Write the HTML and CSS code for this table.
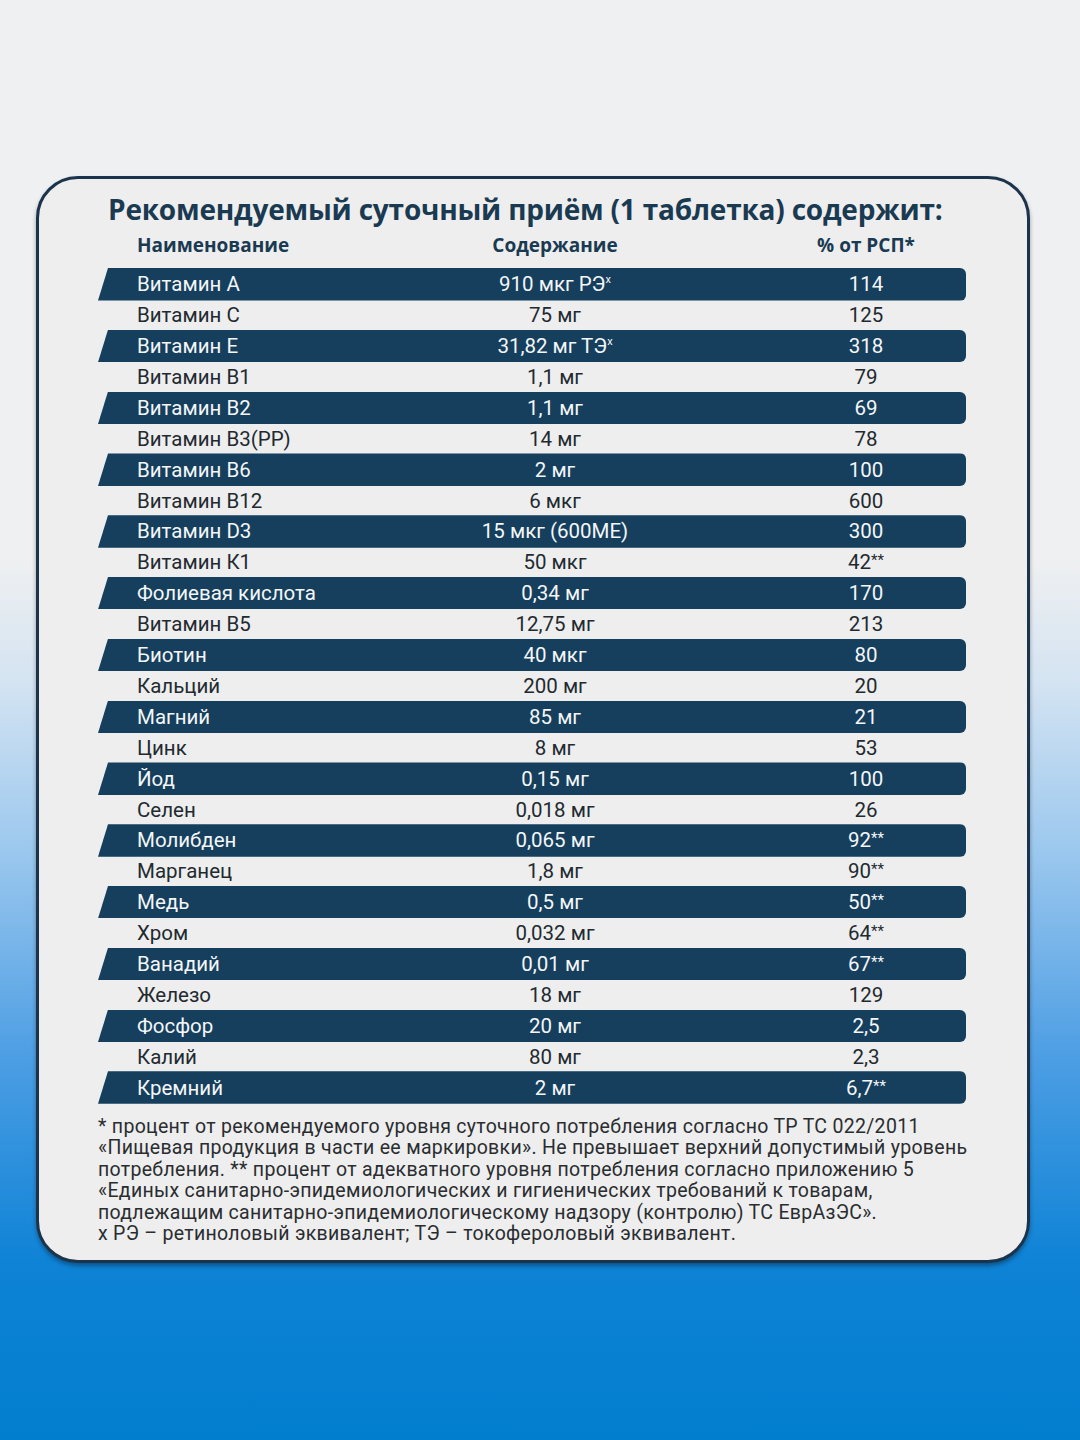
FILE: index.html
```html
<!DOCTYPE html>
<html lang="ru">
<head>
<meta charset="utf-8">
<title>Состав</title>
<link rel="stylesheet" href="styles.css">
</head>
<body>
<div class="page">
  <div class="card">
    <h1 class="title">Рекомендуемый суточный приём (1 таблетка) содержит:</h1>
    <div class="head">
      <div class="c-name">Наименование</div>
      <div class="c-val">Содержание</div>
      <div class="c-pct">% от РСП*</div>
    </div>
    <div class="table">
      <div class="row dark"><div class="c-name">Витамин А</div><div class="c-val">910 мкг РЭ<sup>x</sup></div><div class="c-pct">114</div></div>
      <div class="row light"><div class="c-name">Витамин С</div><div class="c-val">75 мг</div><div class="c-pct">125</div></div>
      <div class="row dark"><div class="c-name">Витамин Е</div><div class="c-val">31,82 мг ТЭ<sup>x</sup></div><div class="c-pct">318</div></div>
      <div class="row light"><div class="c-name">Витамин В1</div><div class="c-val">1,1 мг</div><div class="c-pct">79</div></div>
      <div class="row dark"><div class="c-name">Витамин В2</div><div class="c-val">1,1 мг</div><div class="c-pct">69</div></div>
      <div class="row light"><div class="c-name">Витамин В3(РР)</div><div class="c-val">14 мг</div><div class="c-pct">78</div></div>
      <div class="row dark"><div class="c-name">Витамин В6</div><div class="c-val">2 мг</div><div class="c-pct">100</div></div>
      <div class="row light"><div class="c-name">Витамин В12</div><div class="c-val">6 мкг</div><div class="c-pct">600</div></div>
      <div class="row dark"><div class="c-name">Витамин D3</div><div class="c-val">15 мкг (600МЕ)</div><div class="c-pct">300</div></div>
      <div class="row light"><div class="c-name">Витамин К1</div><div class="c-val">50 мкг</div><div class="c-pct">42<sup class="st">**</sup></div></div>
      <div class="row dark"><div class="c-name">Фолиевая кислота</div><div class="c-val">0,34 мг</div><div class="c-pct">170</div></div>
      <div class="row light"><div class="c-name">Витамин В5</div><div class="c-val">12,75 мг</div><div class="c-pct">213</div></div>
      <div class="row dark"><div class="c-name">Биотин</div><div class="c-val">40 мкг</div><div class="c-pct">80</div></div>
      <div class="row light"><div class="c-name">Кальций</div><div class="c-val">200 мг</div><div class="c-pct">20</div></div>
      <div class="row dark"><div class="c-name">Магний</div><div class="c-val">85 мг</div><div class="c-pct">21</div></div>
      <div class="row light"><div class="c-name">Цинк</div><div class="c-val">8 мг</div><div class="c-pct">53</div></div>
      <div class="row dark"><div class="c-name">Йод</div><div class="c-val">0,15 мг</div><div class="c-pct">100</div></div>
      <div class="row light"><div class="c-name">Селен</div><div class="c-val">0,018 мг</div><div class="c-pct">26</div></div>
      <div class="row dark"><div class="c-name">Молибден</div><div class="c-val">0,065 мг</div><div class="c-pct">92<sup class="st">**</sup></div></div>
      <div class="row light"><div class="c-name">Марганец</div><div class="c-val">1,8 мг</div><div class="c-pct">90<sup class="st">**</sup></div></div>
      <div class="row dark"><div class="c-name">Медь</div><div class="c-val">0,5 мг</div><div class="c-pct">50<sup class="st">**</sup></div></div>
      <div class="row light"><div class="c-name">Хром</div><div class="c-val">0,032 мг</div><div class="c-pct">64<sup class="st">**</sup></div></div>
      <div class="row dark"><div class="c-name">Ванадий</div><div class="c-val">0,01 мг</div><div class="c-pct">67<sup class="st">**</sup></div></div>
      <div class="row light"><div class="c-name">Железо</div><div class="c-val">18 мг</div><div class="c-pct">129</div></div>
      <div class="row dark"><div class="c-name">Фосфор</div><div class="c-val">20 мг</div><div class="c-pct">2,5</div></div>
      <div class="row light"><div class="c-name">Калий</div><div class="c-val">80 мг</div><div class="c-pct">2,3</div></div>
      <div class="row dark"><div class="c-name">Кремний</div><div class="c-val">2 мг</div><div class="c-pct">6,7<sup class="st">**</sup></div></div>
    </div>
    <div class="notes">
      <div class="line">* процент от рекомендуемого уровня суточного потребления согласно ТР ТС 022/2011</div>
      <div class="line">«Пищевая продукция в части ее маркировки». Не превышает верхний допустимый уровень</div>
      <div class="line">потребления. ** процент от адекватного уровня потребления согласно приложению 5</div>
      <div class="line">«Единых санитарно-эпидемиологических и гигиенических требований к товарам,</div>
      <div class="line">подлежащим санитарно-эпидемиологическому надзору (контролю) ТС ЕврАзЭС».</div>
      <div class="line">х РЭ – ретиноловый эквивалент; ТЭ – токофероловый эквивалент.</div>
    </div>
  </div>
</div>
</body>
</html>
```

FILE: styles.css
```css
html, body {
  margin: 0;
  padding: 0;
}
body {
  width: 1080px;
  height: 1440px;
  overflow: hidden;
  background: linear-gradient(to bottom,
    #eff0f1 0px,
    #eff0f1 560px,
    #d4e4f2 680px,
    #9cc8ee 850px,
    #4f9fe4 1050px,
    #0f83d6 1260px,
    #027ecf 1440px);
  font-family: Roboto, "Liberation Sans", sans-serif;
}
.page {
  padding-top: 176px;
  padding-left: 36px;
}
.card {
  box-sizing: border-box;
  width: 994px;
  height: 1087px;
  border: 3px solid #1b344b;
  border-radius: 42px;
  background: #eeeeee;
  box-shadow: 0 3px 4px rgba(0, 0, 0, 0.35);
  padding: 12px 0 0 59px;
}
.title {
  margin: 0 0 0 10px;
  font-family: "Open Sans", "Liberation Sans", sans-serif;
  font-weight: 700;
  font-size: 28px;
  letter-spacing: -0.2px;
  line-height: 36px;
  color: #1a3a52;
  white-space: nowrap;
}
.head, .row {
  display: grid;
  grid-template-columns: 304px 306px 258px;
  width: 868px;
  align-items: center;
}
.head {
  margin-top: 3px;
  height: 30px;
  font-family: "Open Sans", "Liberation Sans", sans-serif;
  font-weight: 700;
  font-size: 19px;
  color: #1a3a52;
}
.c-name {
  padding-left: 39px;
  white-space: nowrap;
}
.c-val {
  text-align: center;
  white-space: nowrap;
}
.c-pct {
  padding-left: 58px;
  text-align: center;
  white-space: nowrap;
}
.table {
  margin-top: 8px;
}
.row {
  font-size: 20.5px;
}
.row.dark {
  height: 32.5px;
  background: #153f5d;
  color: #f4f6f8;
  border-radius: 0 6px 6px 0;
  clip-path: polygon(10px 0, 100% 0, 100% 100%, 0 100%);
}
.row.light {
  height: 29.3px;
  color: #222a30;
}
sup {
  font-size: 11px;
  vertical-align: 8px;
  line-height: 0;
}
sup.st {
  font-size: 15px;
  vertical-align: 4px;
}
.notes {
  margin-top: 12px;
  font-size: 19.5px;
  letter-spacing: 0.3px;
  line-height: 21.5px;
  color: #2a2d30;
}
.line {
  white-space: nowrap;
}
```
